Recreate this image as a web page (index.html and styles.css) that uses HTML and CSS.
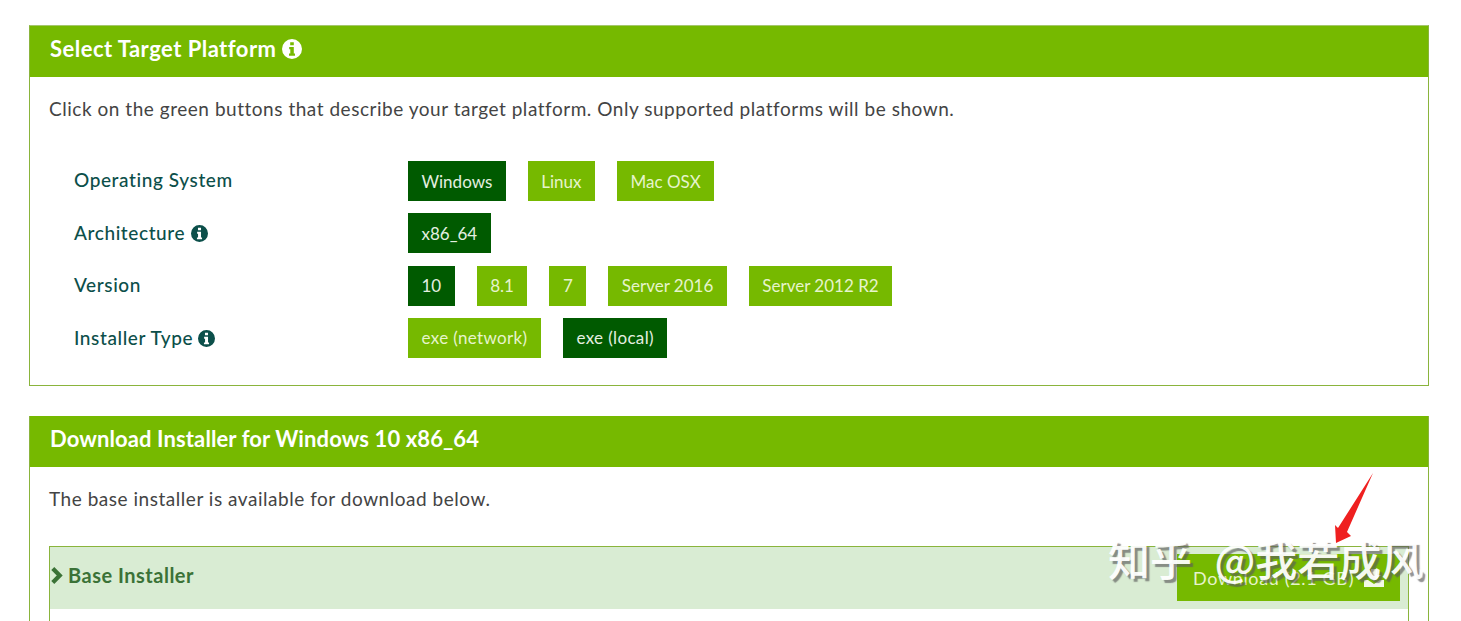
FILE: index.html
```html
<!DOCTYPE html>
<html lang="en">

<head>
    <meta charset="UTF-8">
    <title>Select Target Platform</title>
    <link rel="stylesheet" href="styles.css">
</head>

<body>
    <svg class="defs" width="0" height="0">
        <symbol id="info" viewBox="0 0 20 20">
            <path fill-rule="evenodd" d="M10 0a10 10 0 1 0 0 20a10 10 0 0 0 0-20zM8.2 3.2h3.6v3h-3.6zM7.2 8h4.6v6.6h1.2v2.2H7v-2.2h1.3v-4.4H7.2z"/>
        </symbol>
    </svg>

    <section class="panel">
        <h2 class="panel-title wide">Select Target Platform <svg class="info"><use href="#info"/></svg></h2>
        <div class="panel-body">
            <p class="intro">Click on the green buttons that describe your target platform. Only supported platforms will be shown.</p>
            <div class="options">
                <div class="row">
                    <div class="row-label">Operating System</div>
                    <div class="btns">
                        <a class="btn active">Windows</a>
                        <a class="btn">Linux</a>
                        <a class="btn">Mac OSX</a>
                    </div>
                </div>
                <div class="row">
                    <div class="row-label has-info">Architecture <svg class="info small"><use href="#info"/></svg></div>
                    <div class="btns">
                        <a class="btn active">x86_64</a>
                    </div>
                </div>
                <div class="row">
                    <div class="row-label">Version</div>
                    <div class="btns">
                        <a class="btn active">10</a>
                        <a class="btn">8.1</a>
                        <a class="btn">7</a>
                        <a class="btn">Server 2016</a>
                        <a class="btn">Server 2012 R2</a>
                    </div>
                </div>
                <div class="row">
                    <div class="row-label has-info">Installer Type <svg class="info small"><use href="#info"/></svg></div>
                    <div class="btns spaced">
                        <a class="btn">exe (network)</a>
                        <a class="btn active">exe (local)</a>
                    </div>
                </div>
            </div>
        </div>
    </section>

    <section class="panel second">
        <h2 class="panel-title">Download Installer for Windows 10 x86_64</h2>
        <div class="panel-body">
            <p class="intro">The base installer is available for download below.</p>
            <div class="installer">
                <div class="installer-head">
                    <h3 class="installer-name">
                        <svg class="chevron" viewBox="0 0 12 16"><path d="M2.5 1.5L9 8L2.5 14.5"/></svg>
                        Base Installer
                    </h3>
                    <a class="btn download">Download (2.1 GB)
                        <svg class="dl-icon" viewBox="0 0 20 18"><path d="M7 0h6v6h4l-7 6l-7-6h4z"/><path d="M0 11h4l6 4l6-4h4v7H0z"/></svg>
                    </a>
                </div>
            </div>
        </div>
    </section>

    <svg class="arrow" viewBox="0 0 42 78"><path d="M41 1L15 60L19 64L4 71L3 53L6 56z"/></svg>
    <div class="watermark">知乎 @我若成风</div>
</body>

</html>
```

FILE: styles.css
```css
html {
    overflow: hidden;
}

body {
    margin: 0;
    padding: 25px 32px 0 29px;
    background: #fff;
    font-family: Lato, "Open Sans", Arial, sans-serif;
    color: #444;
    position: relative;
    height: 596px;
    overflow: hidden;
}

.defs {
    position: absolute;
}

.panel {
    border: 1px solid #8ab43c;
    border-top-color: #a5c66c;
}

.second {
    margin-top: 30px;
    border-top: 0;
    border-bottom: 0;
}

.panel-title {
    margin: 0;
    height: 51px;
    padding: 0 20px;
    background: #76b900;
    color: #fff;
    font-size: 22px;
    font-weight: 700;
    line-height: 46px;
    letter-spacing: 0.1px;
}

.panel-title.wide {
    letter-spacing: 0.47px;
}

.info {
    width: 20px;
    height: 20px;
    fill: #fff;
    vertical-align: -2px;
}

.info.small {
    width: 17px;
    height: 17px;
    fill: #0c4f4a;
    vertical-align: -2px;
}

.panel-body {
    padding: 0 19px 27px;
}

.second .panel-body {
    padding-bottom: 0;
}

.intro {
    margin: 0;
    padding-top: 20px;
    font-size: 19px;
    line-height: 24px;
    letter-spacing: 0.53px;
    color: #444;
}

.options {
    margin-top: 40px;
    padding-left: 25px;
    display: flex;
    flex-direction: column;
    gap: 12.3px;
}

.row {
    display: flex;
    align-items: center;
}

.row-label {
    width: 334px;
    margin-bottom: 3px;
    font-size: 19px;
    font-weight: 500;
    letter-spacing: 0.6px;
    color: #0c4f4a;
}

.row-label.has-info {
    margin-bottom: 1px;
}

.btns {
    display: flex;
    gap: 22px;
}

.btns.spaced {
    letter-spacing: 0.35px;
}

.btn {
    height: 40px;
    padding: 0 13.5px;
    display: flex;
    align-items: center;
    background: #76b900;
    color: #e6f4cc;
    font-size: 17px;
}

.btn.active {
    background: #005a00;
    color: #e4efe0;
}

.installer {
    margin-top: 35px;
    height: 75px;
    border: 1px solid #8ab43c;
    border-bottom: 0;
}

.installer-head {
    height: 62px;
    background: #d9ecd3;
    display: flex;
    align-items: center;
    justify-content: space-between;
    padding-right: 8px;
}

.installer-name {
    margin: 0 0 5px;
    display: flex;
    align-items: center;
    gap: 5px;
    font-size: 20px;
    font-weight: 700;
    letter-spacing: 0.5px;
    color: #3b7237;
}

.chevron {
    width: 13px;
    height: 17px;
    fill: none;
    stroke: #3b7237;
    stroke-width: 4;
}

.download {
    width: 223px;
    height: 47px;
    padding: 0 16px;
    box-sizing: border-box;
    justify-content: space-between;
    font-size: 18px;
    letter-spacing: 0.65px;
}

.dl-icon {
    width: 20px;
    height: 18px;
    fill: #f3f9e6;
}

/* screenshot annotation and site watermark lying over the page */
.arrow {
    position: absolute;
    left: 1332px;
    top: 472px;
    width: 42px;
    height: 78px;
    fill: #ef2020;
}

.watermark {
    position: absolute;
    left: 1108px;
    top: 532px;
    font-family: "Noto Sans CJK SC", sans-serif;
    font-size: 42px;
    font-weight: 500;
    line-height: 52px;
    word-spacing: 13px;
    white-space: nowrap;
    color: rgba(255, 255, 255, 0.94);
    text-shadow: 3px 3px 1px rgba(90, 90, 90, 0.65);
}
```
